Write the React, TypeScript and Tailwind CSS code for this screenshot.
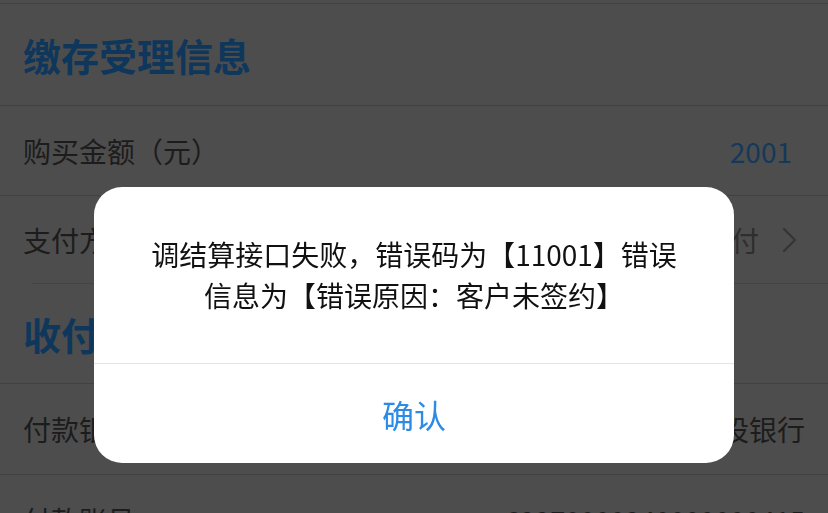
const rowBase = "flex items-center justify-between border-t border-[#414141] pl-[23px]";

const ChevronRight = () => (
  <svg width="16" height="28" viewBox="0 0 16 28" fill="none" className="ml-[22px]">
    <polyline points="3,3 14,14 3,25" stroke="#353535" strokeWidth="2.4" strokeLinecap="round" strokeLinejoin="round" />
  </svg>
);

const App = () => {
  return (
    <div className="relative h-screen overflow-hidden bg-[#4d4d4d] font-['Noto_Sans_CJK_SC','Liberation_Sans',sans-serif]">
      <div className="h-[3px]" />

      <div className={`${rowBase} h-[102px]`}>
        <h2 className="text-[38px] font-bold leading-none text-[#0f375c]">缴存受理信息</h2>
      </div>

      <div className={`${rowBase} h-[90px] pr-[36px]`}>
        <span className="text-[28px] leading-none text-[#1c1c1c]">购买金额（元）</span>
        <span className="text-[28px] leading-none text-[#14395b]">2001</span>
      </div>

      <div className={`${rowBase} h-[88px] pr-[31px]`}>
        <span className="text-[28px] leading-none text-[#1c1c1c]">支付方式</span>
        <div className="flex items-center">
          <span className="text-[28px] leading-none text-[#2e2e2e]">在线支付</span>
          <ChevronRight />
        </div>
      </div>

      <div className="ml-[32px] h-px bg-[#434343]" />
      <div className="flex h-[99px] items-center pl-[23px]">
        <h2 className="text-[38px] font-bold leading-none text-[#0f375c]">收付款信息</h2>
      </div>

      <div className={`${rowBase} h-[91px] pr-[23px]`}>
        <span className="text-[28px] leading-none text-[#1c1c1c]">付款银行</span>
        <span className="text-[28px] leading-none text-[#1c1c1c]">中国建设银行</span>
      </div>

      <div className={`${rowBase} h-[90px] pr-[23px]`}>
        <span className="text-[28px] leading-none text-[#1c1c1c]">付款账号</span>
        <span className="text-[27px] leading-none text-[#1c1c1c]">62270000240000000415</span>
      </div>

      <div className="fixed inset-0 flex justify-center pt-[187px]">
        <div className="flex h-[276px] w-[640px] flex-col overflow-hidden rounded-[28px] bg-white">
          <div className="flex h-[176px] items-center justify-center px-[48px]">
            <p className="text-center text-[28px] leading-[41px] text-[#111111]">
              调结算接口失败，错误码为【11001】错误信息为【错误原因：客户未签约】
            </p>
          </div>
          <div className="h-px bg-[#e4e4e4]" />
          <button className="flex flex-1 items-center justify-center text-[32px] leading-none text-[#2b8be6]">
            确认
          </button>
        </div>
      </div>
    </div>
  );
};

export default App;
